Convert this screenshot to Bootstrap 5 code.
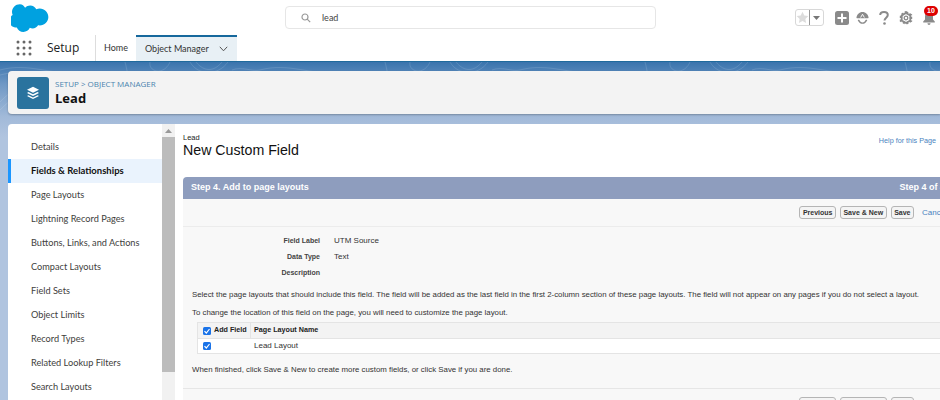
<!DOCTYPE html>
<html lang="en">
<head>
<meta charset="utf-8">
<title>Setup - Lead</title>
<link href="https://cdn.jsdelivr.net/npm/bootstrap@5.3.0/dist/css/bootstrap.min.css" rel="stylesheet">
<style>
html,body{width:940px;height:400px;overflow:hidden;margin:0;background:#fff}
body{font-family:Lato,"Liberation Sans",sans-serif;color:#16325c}
.sf-top{height:35px}
.sf-logo{width:44px;margin-left:11px;flex:none}
.sf-search{width:371px;height:23px;margin-left:230px;border:1px solid #e6e6e6;border-radius:4px;font-size:9px;color:#444}
.sf-search svg{margin:0 11px 0 15px}
.sf-tools{margin-left:139px}
.sf-fav{width:29px;height:17px;border:1px solid #d8d8d8;border-radius:3px}
.sf-fav span{flex:1;height:100%}
.sf-fav span+span{border-left:1px solid #999;display:flex;align-items:center;justify-content:center}
.sf-plus{margin-left:11px}
.sf-cloud{margin-left:7px}
.sf-q{margin-left:10px}
.sf-gear{margin-left:10px}
.sf-bell{position:relative;width:16px;margin-left:9px}
.sf-badge{position:absolute;left:2px;top:-5px;width:14px;height:10px;border-radius:5px;background:#d00;color:#fff;font:700 7px/10px "Liberation Sans",sans-serif;text-align:center}
.sf-nav{height:26px}
.sf-dots{width:16px;margin-left:16px;flex:none}
.sf-app{font-size:12px;color:#222;margin-left:15px;width:48px;flex:none;font-family:"Open Sans",sans-serif}
.sf-home{border-left:1px solid #ddd;height:26px;width:41px;font-size:9px;color:#333;flex:none}
.sf-tab{width:101px;height:26px;background:#e8f0f5;border-top:2px solid #16689c;font-size:9px;color:#333;padding:0 9px;flex:none}
.sf-stage{height:339px;padding-top:9px;border-top:1px solid #1f6a9c;background-color:#b0c4df;background-image:url("data:image/svg+xml,%3Csvg xmlns='http://www.w3.org/2000/svg' width='260' height='70' fill='none' stroke='%23fff' stroke-opacity='.12'%3E%3Cpath d='M0 8c30-8 50 6 80 2M0 13c30-8 50 8 84 3M0 40c14-14 26-22 42-30M0 48c16-16 30-24 50-34M125 0c4 14 2 22 8 14M150 0c-2 10 14 14 20 0M190 0c8 14 28 14 38 0M196 0c8 10 18 10 26 0M232 8c10-4 20 2 28 0'/%3E%3C/svg%3E"),linear-gradient(180deg,#3a74ad 0,#6f98c5 22px,#a2bad9 55px,#b0c4df 75px);background-repeat:repeat-x,no-repeat}
.sf-head{height:43px;margin-left:8px;background:#f3f3f3;border-radius:4px 0 0 4px;box-shadow:0 1px 2px rgba(0,0,0,.25);padding-left:9px}
.sf-ico{width:32px;height:32px;background:#2a739e;border-radius:3px;flex:none}
.sf-crumb{font-size:8px;line-height:11px;color:#4a83ae;margin-bottom:1px;font-family:"Open Sans",sans-serif}
.sf-title{font-size:13px;line-height:17px;font-weight:700;color:#111;font-family:"Open Sans",sans-serif}
.sf-panel{height:276px;margin:10px 0 0 8px;background:#fff;border-radius:4px 0 0 0}
.sf-side{width:154px;flex:none;padding-top:11px}
.sf-link{height:24px;padding-left:23px;font-size:9.200px;color:#3e3e3c}
.sf-on{background:#eaf3fd;border-left:3px solid #1b96ff;padding-left:20px;font-size:9.500px;font-weight:700;color:#111}
.sf-bar{width:13px;flex:none;background:#f1f1f1;display:flex;flex-direction:column}
.sf-up{height:13px;display:flex;align-items:center;justify-content:center}
.sf-thumb{height:235px;background:#bcbcbc}
.sf-main{width:820px;flex:none;padding-left:8px;font-family:"Liberation Sans",sans-serif;color:#222}
.sf-pagehead{height:53px;padding-top:9px}
.sf-sub{font-size:7.500px;line-height:9px;color:#222}
.sf-h1{font-size:14.200px;line-height:17px;font-weight:400;margin:0;color:#111}
.sf-help{font-size:7.200px;color:#4a83c0;position:relative;top:3px;margin-right:59px}
.sf-step{height:22px;background:#8e9dbe;border-radius:4px 4px 0 0;color:#fff;font-size:9px;font-weight:700;padding:0 8px}
.sf-step b{margin-right:42px}
.sf-body{background:#f8f8f8;height:210px;font-size:8px;color:#333}
.sf-btns{height:28px;border-bottom:1px solid #ececec;padding-right:33px}
.sf-btns2{padding-right:33px}
.sf-btn{height:13px;padding:0 2.500px;background:#f4f4f4;border:1px solid #b5b5b5;border-radius:3px;font:700 7px/11px "Liberation Sans",sans-serif;color:#333;margin-right:4px}
.sf-cancel{font-size:8px;color:#4a83c0;margin-left:4px;width:40px}
.sf-rows{padding-top:6px}
.sf-row{height:16px}
.sf-row b{width:137px;text-align:right;color:#444;font-size:7px}
.sf-row span{margin-left:14px}
.sf-note{margin:0 0 0 9px;line-height:10px;white-space:nowrap;font-size:7.850px}
.sf-grid{margin:4px 0 0 14px;border:1px solid #e4e4e4;background:#fff;width:800px;font-size:8px}
.sf-gh{height:16px;background:#f3f3f3;border-bottom:1px solid #e4e4e4;font-weight:700;color:#222;font-size:7.200px}
.sf-gr{height:14px}
.sf-c1{width:53px;padding-left:5px;gap:3px;flex:none;height:100%;border-right:1px solid #e4e4e4;white-space:nowrap}
.sf-gr .sf-c1{border:0}
.sf-c2{padding-left:3px}
.sf-chk{width:8px;height:8px;background:#1a73e8;border-radius:1.500px;display:block;flex:none}
.sf-end{margin-top:13px;border-top:1px solid #e6e6e6;padding-top:8px}
</style>
</head>
<body>
<header class="sf-top d-flex align-items-center bg-white">
  <svg class="sf-logo" viewBox="0 0 44 28" height="28"><path fill="#00A1E0" d="M17 4.600c1.600-1.700 3.700-2.700 6.100-2.700 3.200 0 5.900 1.800 7.400 4.400 1.300-.6 2.700-.9 4.100-.9C40.300 5.400 45 10 45 15.600s-4.700 10.200-10.400 10.200c-.7 0-1.400-.1-2-.2-1.300 2.300-3.800 3.900-6.600 3.900-1.200 0-2.300-.3-3.300-.8-1.300 3-4.300 5-7.800 5-3.600 0-6.700-2.300-7.900-5.500-.5.1-1.100.2-1.700.2C1.600 28.400-2 24.800-2 20.300c0-3 1.600-5.600 4-7-.5-1.100-.8-2.400-.8-3.700C1.200 4.400 5.500.3 10.700.3c3 0 5 1.800 6.300 4.300z" transform="scale(.83)"/></svg>
  <div class="sf-search d-flex align-items-center">
    <svg width="10" height="10" viewBox="0 0 10 10" fill="none" stroke="#999" stroke-width="1.200"><circle cx="4" cy="4" r="3"/><path d="M6.200 6.200 9.200 9.200"/></svg>lead
  </div>
  <div class="sf-tools d-flex align-items-center">
    <div class="sf-fav d-flex align-items-center">
      <span class="d-flex align-items-center justify-content-center"><svg width="13" height="13" viewBox="0 0 24 24"><path fill="#dcdcdc" d="M12 1.500l3.300 7 7.500.9-5.600 5.200 1.500 7.600L12 18.400l-6.700 3.800 1.500-7.600L1.200 9.400l7.500-.9z"/></svg></span>
      <span><svg width="7" height="4" viewBox="0 0 7 4"><path fill="#777" d="M0 0h7L3.500 4z"/></svg></span>
    </div>
    <svg class="sf-plus" width="14" height="14" viewBox="0 0 14 14"><rect width="14" height="14" rx="2.500" fill="#8a8a8a"/><path d="M7 2.500v9M2.500 7h9" stroke="#fff" stroke-width="2"/></svg>
    <svg class="sf-cloud" width="13" height="13" viewBox="0 0 14 14"><path fill="#8a8a8a" d="M7 1C3.500 1 .8 3.700.5 7.200c0 .3.200.5.500.5h12c.3 0 .5-.2.500-.5C13.200 3.700 10.500 1 7 1z"/><path d="M2.500 9.500c1 2 3 3.500 4.500 3.500s3.500-1.500 4.500-3.500" fill="none" stroke="#8a8a8a" stroke-width="1.500"/><path d="M7 3.500 5 7M7 3.500 9 7" stroke="#fff"/></svg>
    <svg class="sf-q" width="10" height="14" viewBox="0 0 10 14"><path d="M1.200 4C1.200 2 3 1 5 1s3.800 1 3.800 3c0 2.500-3.300 2.800-3.300 5.500" fill="none" stroke="#8a8a8a" stroke-width="2"/><circle cx="5.500" cy="12.500" r="1.300" fill="#8a8a8a"/></svg>
    <svg class="sf-gear" width="14" height="14" viewBox="0 0 14 14"><path fill="none" stroke="#8a8a8a" stroke-width="2.400" stroke-dasharray="2.200 1.500" d="M7 1.300 12 4.100v5.800L7 12.700 2 9.900V4.100z"/><path fill="none" stroke="#8a8a8a" stroke-width="1.800" d="M7 2 11.300 4.500v5L7 12 2.700 9.500v-5z"/><circle cx="7" cy="7" r="1.800" fill="none" stroke="#8a8a8a" stroke-width="1.300"/></svg>
    <div class="sf-bell">
      <svg class="d-block" width="14" height="14" viewBox="0 0 14 14"><path fill="#8a8a8a" d="M7 1c2.500 0 4 1.900 4 4.300v3.200l1.800 2V11.500H1.200V10.500l1.800-2V5.300C3 2.900 4.500 1 7 1zM5.500 12.300h3C8.500 13.300 7.800 14 7 14s-1.500-.7-1.500-1.700z"/></svg>
      <span class="sf-badge">10</span>
    </div>
  </div>
</header>
<nav class="sf-nav d-flex align-items-center bg-white">
  <svg class="sf-dots" viewBox="0 0 16 16" height="16" fill="#666"><circle cx="2" cy="2" r="1.500"/><circle cx="8" cy="2" r="1.500"/><circle cx="14" cy="2" r="1.500"/><circle cx="2" cy="8" r="1.500"/><circle cx="8" cy="8" r="1.500"/><circle cx="14" cy="8" r="1.500"/><circle cx="2" cy="14" r="1.500"/><circle cx="8" cy="14" r="1.500"/><circle cx="14" cy="14" r="1.500"/></svg>
  <div class="sf-app">Setup</div>
  <div class="sf-home d-flex align-items-center justify-content-center">Home</div>
  <div class="sf-tab d-flex align-items-center justify-content-between"><span>Object Manager</span>
    <svg width="9" height="6" viewBox="0 0 9 6" fill="none" stroke="#555" stroke-width="1"><path d="M.8.800 4.500 4.800 8.200.800"/></svg></div>
</nav>
<main class="sf-stage">
  <div class="sf-head d-flex align-items-center" style="gap:6px">
    <div class="sf-ico d-flex align-items-center justify-content-center">
      <svg width="14" height="14" viewBox="0 0 14 14" fill="#fff"><path d="M7 .8 13 3.800 7 6.800 1 3.800z"/><path d="M2.400 6 7 8.300 11.600 6 13 6.900 7 9.900 1 6.900z"/><path d="M2.400 9.200 7 11.500 11.600 9.200 13 10.100 7 13.100 1 10.100z"/></svg>
    </div>
    <div><div class="sf-crumb">SETUP &gt; OBJECT MANAGER</div><div class="sf-title">Lead</div></div>
  </div>
  <div class="sf-panel d-flex overflow-hidden">
    <aside class="sf-side">
      <div class="sf-link d-flex align-items-center">Details</div>
      <div class="sf-link sf-on d-flex align-items-center">Fields &amp; Relationships</div>
      <div class="sf-link d-flex align-items-center">Page Layouts</div>
      <div class="sf-link d-flex align-items-center">Lightning Record Pages</div>
      <div class="sf-link d-flex align-items-center">Buttons, Links, and Actions</div>
      <div class="sf-link d-flex align-items-center">Compact Layouts</div>
      <div class="sf-link d-flex align-items-center">Field Sets</div>
      <div class="sf-link d-flex align-items-center">Object Limits</div>
      <div class="sf-link d-flex align-items-center">Record Types</div>
      <div class="sf-link d-flex align-items-center">Related Lookup Filters</div>
      <div class="sf-link d-flex align-items-center">Search Layouts</div>
    </aside>
    <div class="sf-bar"><div class="sf-up"><svg width="7" height="4" viewBox="0 0 7 4"><path fill="#999" d="M3.500 0 7 4H0z"/></svg></div><div class="sf-thumb"></div></div>
    <section class="sf-main">
      <div class="sf-pagehead d-flex justify-content-between">
        <div><div class="sf-sub">Lead</div><h1 class="sf-h1">New Custom Field</h1></div>
        <div class="sf-help">Help for this Page</div>
      </div>
      <div class="sf-step d-flex align-items-center justify-content-between"><span>Step 4. Add to page layouts</span><b>Step 4 of 4</b></div>
      <div class="sf-body">
        <div class="sf-btns d-flex align-items-center justify-content-end">
          <button class="sf-btn" type="button">Previous</button><button class="sf-btn" type="button">Save &amp; New</button><button class="sf-btn" type="button">Save</button><span class="sf-cancel">Cancel</span>
        </div>
        <div class="sf-rows">
          <div class="sf-row d-flex align-items-center"><b>Field Label</b><span>UTM Source</span></div>
          <div class="sf-row d-flex align-items-center"><b>Data Type</b><span>Text</span></div>
          <div class="sf-row d-flex align-items-center"><b>Description</b><span></span></div>
        </div>
        <p class="sf-note" style="margin-top:9px">Select the page layouts that should include this field. The field will be added as the last field in the first 2-column section of these page layouts. The field will not appear on any pages if you do not select a layout.</p>
        <p class="sf-note" style="margin-top:8px">To change the location of this field on the page, you will need to customize the page layout.</p>
        <div class="sf-grid">
          <div class="sf-gh d-flex align-items-center"><div class="sf-c1 d-flex align-items-center"><svg class="sf-chk" viewBox="0 0 8 8"><path d="M1.500 4.200 3.300 6 6.500 2" fill="none" stroke="#fff" stroke-width="1.200"/></svg>Add Field</div><div class="sf-c2">Page Layout Name</div></div>
          <div class="sf-gr d-flex align-items-center"><div class="sf-c1 d-flex align-items-center"><svg class="sf-chk" viewBox="0 0 8 8"><path d="M1.500 4.200 3.300 6 6.500 2" fill="none" stroke="#fff" stroke-width="1.200"/></svg></div><div class="sf-c2">Lead Layout</div></div>
        </div>
        <p class="sf-note" style="margin-top:11px">When finished, click Save &amp; New to create more custom fields, or click Save if you are done.</p>
        <div class="sf-end"><div class="sf-btns2 d-flex align-items-center justify-content-end">
          <button class="sf-btn" type="button">Previous</button><button class="sf-btn" type="button">Save &amp; New</button><button class="sf-btn" type="button">Save</button><span class="sf-cancel">Cancel</span>
        </div></div>
      </div>
    </section>
  </div>
</main>
<script src="https://cdn.jsdelivr.net/npm/bootstrap@5.3.0/dist/js/bootstrap.bundle.min.js"></script>
</body>
</html>
